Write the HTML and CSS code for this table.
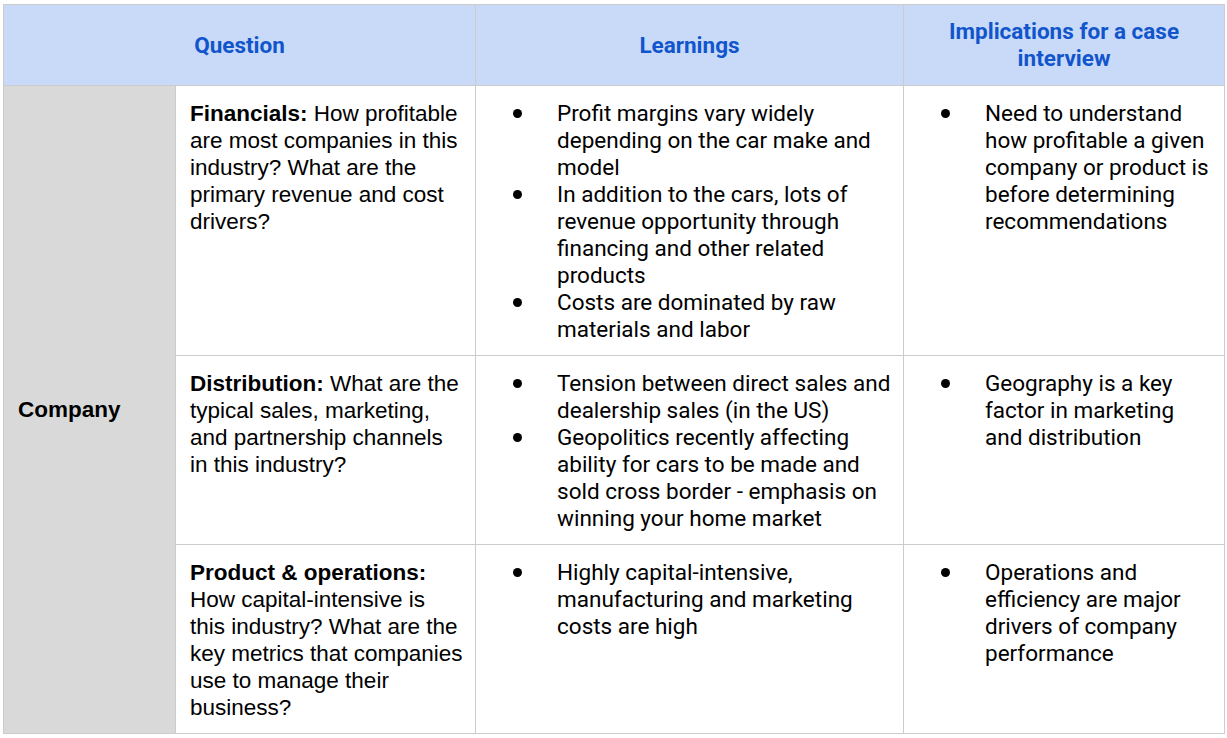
FILE: index.html
```html
<!DOCTYPE html>
<html>
<head>
<meta charset="utf-8">
<link rel="stylesheet" href="styles.css">
</head>
<body>
<table class="grid">
  <colgroup>
    <col class="c1"><col class="c2"><col class="c3"><col class="c4">
  </colgroup>
  <thead>
    <tr class="head">
      <th colspan="2">Question</th>
      <th>Learnings</th>
      <th>Implications for a case interview</th>
    </tr>
  </thead>
  <tbody>
    <tr class="r1">
      <td class="cat" rowspan="3">Company</td>
      <td class="q"><b>Financials:</b> How profitable are most companies in this industry? What are the primary revenue and cost drivers?</td>
      <td class="l">
        <ul class="bul">
          <li>Profit margins vary widely depending on the car make and model</li>
          <li>In addition to the cars, lots of revenue opportunity through financing and other related products</li>
          <li>Costs are dominated by raw materials and labor</li>
        </ul>
      </td>
      <td class="l imp">
        <ul class="bul">
          <li>Need to understand how profitable a given company or product is before determining recommendations</li>
        </ul>
      </td>
    </tr>
    <tr class="r2">
      <td class="q"><b>Distribution:</b> What are the typical sales, marketing, and partnership channels in this industry?</td>
      <td class="l">
        <ul class="bul">
          <li>Tension between direct sales and dealership sales (in the US)</li>
          <li>Geopolitics recently affecting ability for cars to be made and sold cross border - emphasis on winning your home market</li>
        </ul>
      </td>
      <td class="l imp">
        <ul class="bul">
          <li>Geography is a key factor in marketing and distribution</li>
        </ul>
      </td>
    </tr>
    <tr class="r3">
      <td class="q"><b>Product &amp; operations:</b> How capital-intensive is this industry? What are the key metrics that companies use to manage their business?</td>
      <td class="l">
        <ul class="bul">
          <li>Highly capital-intensive, manufacturing and marketing costs are high</li>
        </ul>
      </td>
      <td class="l imp">
        <ul class="bul">
          <li>Operations and efficiency are major drivers of company performance</li>
        </ul>
      </td>
    </tr>
  </tbody>
</table>
</body>
</html>
```

FILE: styles.css
```css
html, body {
  margin: 0;
  padding: 0;
  background: #ffffff;
}
body {
  padding: 4px 0 0 3px;
}
.grid {
  border-collapse: collapse;
  table-layout: fixed;
  width: 1221px;
  font-family: Roboto, "Liberation Sans", sans-serif;
  font-size: 22.5px;
  line-height: 27px;
  color: #000;
}
.c1 { width: 172px; }
.c2 { width: 300px; }
.c3 { width: 428px; }
.c4 { width: 321px; }
.grid th, .grid td {
  border: 1px solid #cccccc;
  padding: 14px 10px 4px 14px;
}
.head { height: 81px; }
.head th {
  background: #c9daf8;
  color: #1155cc;
  font-weight: 700;
  text-align: center;
  vertical-align: middle;
  padding: 4px 40px;
}
.r1 { height: 270px; }
.r2 { height: 189px; }
.r3 { height: 189px; }
.cat {
  background: #d9d9d9;
  font-family: "Liberation Sans", Arial, sans-serif;
  font-weight: 700;
  vertical-align: middle;
}
.grid td.cat {
  padding: 0 14px;
}
.q {
  font-family: "Liberation Sans", Arial, sans-serif;
  vertical-align: top;
}
.grid td.q {
  padding-right: 11px;
}
.grid td.imp {
  padding-right: 12px;
}
.l { vertical-align: top; }
.bul {
  list-style: none;
  margin: 0;
  padding: 0;
}
.bul li {
  position: relative;
  padding-left: 67px;
}
.bul li::before {
  content: "";
  position: absolute;
  left: 23px;
  top: 9px;
  width: 9px;
  height: 9px;
  border-radius: 50%;
  background: #000;
}
```
